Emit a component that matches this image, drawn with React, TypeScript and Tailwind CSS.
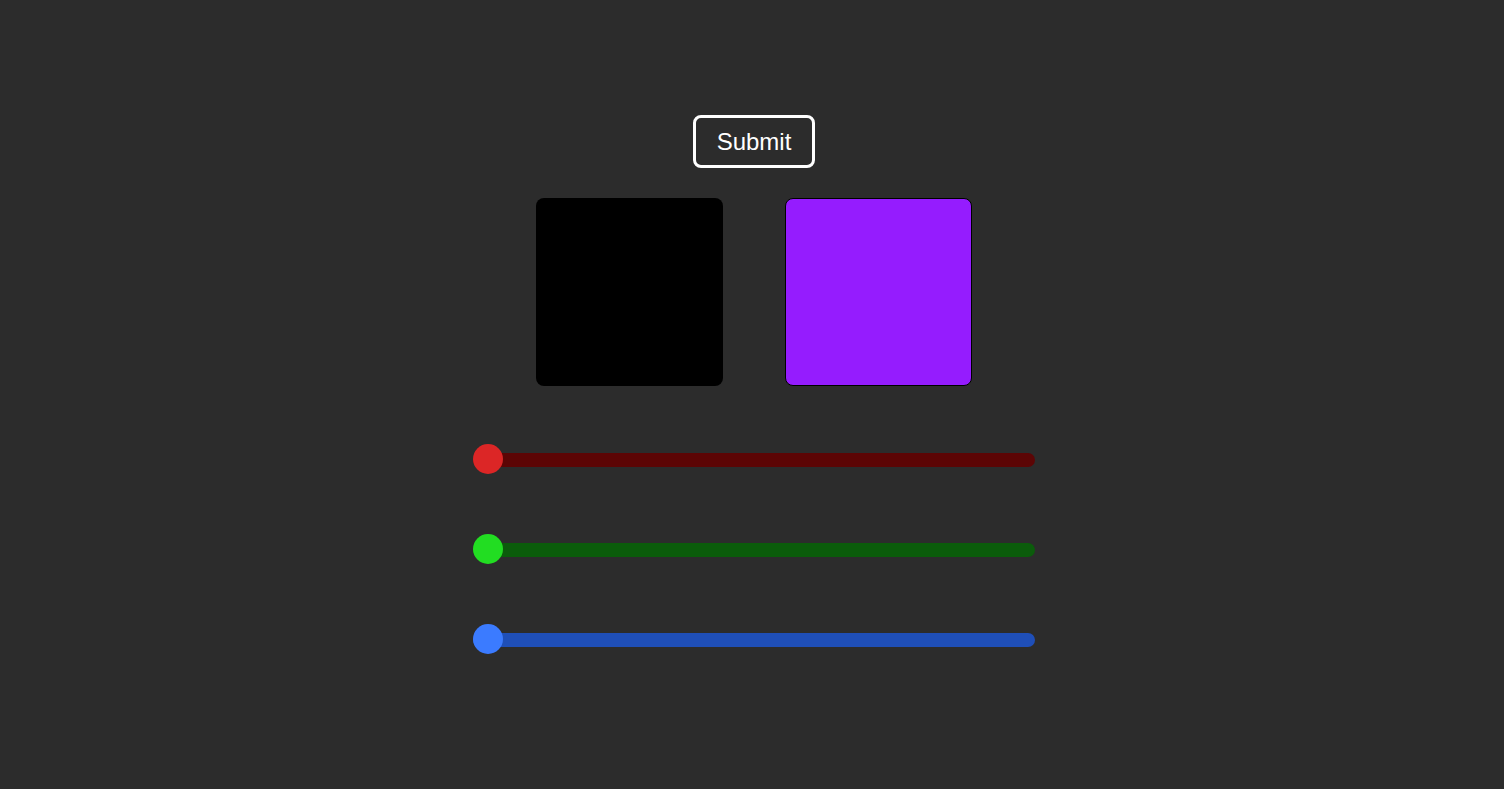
import React, { useState } from "react";

interface Channel {
  name: string;
  value: number;
  track: string;
  thumb: string;
}

const ColorSlider: React.FC<{ channel: Channel }> = ({ channel }) => {
  const pct = (channel.value / 255) * 100;
  return (
    <div className="relative h-[30px] w-[562px] flex items-center">
      <div className={`h-[14px] w-full rounded-full mt-[1px] ${channel.track}`} />
      <div
        className={`absolute top-0 h-[30px] w-[30px] rounded-full ${channel.thumb}`}
        style={{ left: `calc(${pct}% - ${(pct / 100) * 30}px)` }}
      />
    </div>
  );
};

const App: React.FC = () => {
  const [channels] = useState<Channel[]>([
    { name: "red", value: 0, track: "bg-[#5c0505]", thumb: "bg-[#dc2626]" },
    { name: "green", value: 0, track: "bg-[#0b5c0b]", thumb: "bg-[#22dd22]" },
    { name: "blue", value: 0, track: "bg-[#1f4fb8]", thumb: "bg-[#3b7bff]" },
  ]);

  return (
    <div
      className="min-h-[789px] w-full bg-[#2c2c2c] flex flex-col items-center pt-[115px] pl-[4px]"
      style={{ fontFamily: '"Liberation Sans", Arial, sans-serif' }}
    >
      <button className="border-[3px] border-white rounded-[8px] px-[21px] py-[9px] text-[24px] leading-[29px] text-white bg-transparent">
        Submit
      </button>

      <div className="flex gap-[62px] mt-[30px]">
        <div className="w-[187px] h-[188px] rounded-[8px] bg-black" />
        <div className="w-[187px] h-[188px] rounded-[8px] bg-[#951cfe] border border-black" />
      </div>

      <div className="flex flex-col gap-[60px] mt-[58px]">
        {channels.map((c) => (
          <ColorSlider key={c.name} channel={c} />
        ))}
      </div>
    </div>
  );
};

export default App;
